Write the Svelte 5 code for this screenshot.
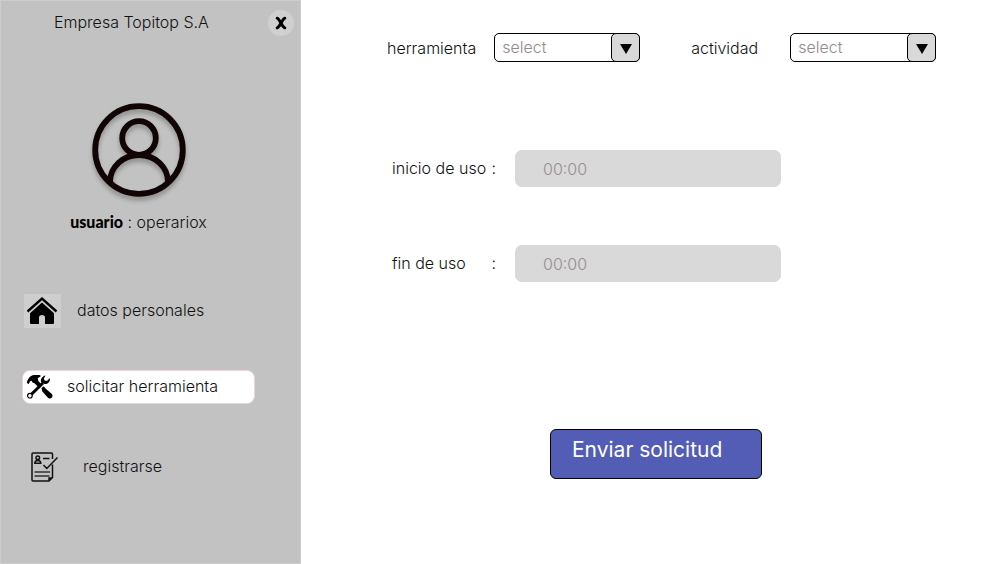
<script>
  const tools = ['martillo', 'taladro', 'sierra'];
  const activities = ['montaje', 'reparación', 'mantenimiento'];

  let tool = $state('');
  let activity = $state('');
  let start = $state('');
  let end = $state('');
</script>

<div class="app">
  <aside class="sidebar">
    <header class="top">
      <span class="company">Empresa Topitop S.A</span>
      <button class="close" type="button" aria-label="Cerrar">
        <svg viewBox="0 0 12 14" width="12" height="14" aria-hidden="true">
          <path d="M2.2 2.2 C4.5 3 6.8 10.500 9.800 11.800 M9.800 2.200 C7.500 3 5.200 10.500 2.200 11.800" />
        </svg>
      </button>
    </header>

    <section class="profile">
      <svg class="avatar" viewBox="0 0 94 94" width="94" height="94" aria-hidden="true">
        <circle cx="47" cy="47" r="43.800" />
        <circle cx="47" cy="35" r="16.800" />
        <path d="M18 79 C18 64 31 52 47 52 S76 64 76 79" />
      </svg>
      <p class="user"><strong>usuario</strong> : operariox</p>
    </section>

    <nav class="menu">
      <a class="item home" href="#datos">
        <span class="tile">
          <svg viewBox="0 0 32 30" width="32" height="30" aria-hidden="true">
            <path d="M0.500 15.500 L15 2.500 L29.500 15.500" fill="none" stroke="#000" stroke-width="2.400" />
            <path d="M15 6.500 L27 17.300 V27 Q27 28 26 28 H18 V21.500 Q18 19 15 19 Q12 19 12 21.500 V28 H4 Q3 28 3 27 V17.300 Z" />
          </svg>
        </span>
        <span>datos personales</span>
      </a>
      <a class="item tool active" href="#solicitar" aria-current="page">
        <svg viewBox="0 0 28 26" width="28" height="26" aria-hidden="true">
          <path d="M0.800 9 C1.500 5 4.500 1.200 8 1 L13.500 1 L15 2 L11.800 4.300 L12.300 7 L15.200 10 L12.200 13 L8.500 9.300 L6.800 8.700 L5.600 6.800 L4 7.200 L2.800 10 Z" />
          <path d="M15.500 14 L17.800 12.300 L19.500 14.500 L25.600 19.800 C28 22 25.500 25.500 22.600 24.200 C20.500 22.600 18.500 19.500 16.300 17.400 Z" />
          <path d="M4.300 21.300 L17 9" fill="none" stroke="#000" stroke-width="3" />
          <path d="M19.500 1.500 L17.800 4.800 L18.800 6.800 L21.200 6.800 L23.800 4 C24.500 8 21.500 10.800 18 9.800 L15.200 8.500 C14.200 5.500 16.200 2 19.500 1.500 Z" />
          <circle cx="3.900" cy="21.700" r="2.300" fill="#fff" stroke="#000" stroke-width="1.200" />
        </svg>
        <span>solicitar herramienta</span>
      </a>
      <a class="item register" href="#registrarse">
        <svg viewBox="0 0 28 30" width="28" height="30" fill="none" stroke="#111" stroke-width="1.500" aria-hidden="true">
          <path d="M21.500 7 V2 Q21.500 1 20.500 1 H2 Q1 1 1 2 V28 Q1 29 2 29 H18 L21.500 25.500 V12.500 M18 29 V26 H21.500" />
          <circle cx="6.800" cy="5.800" r="1.800" />
          <path d="M3.800 11.200 C3.800 7.500 9.800 7.500 9.800 11.200 Z M12 6.500 H18.500 M12.500 13 L15.800 16.500 L26.500 5.500" />
          <path d="M3.500 20 H19 M3.500 24 H18.500" stroke="#333" />
        </svg>
        <span>registrarse</span>
      </a>
    </nav>
  </aside>

  <main>
    <form onsubmit={(e) => e.preventDefault()}>
      <div class="choices">
        <div class="choice">
          <label for="tool">herramienta</label>
          <div class="select">
            <select id="tool" bind:value={tool}>
              <option value="">select</option>
              {#each tools as name}<option>{name}</option>{/each}
            </select>
            <span class="arrow"></span>
          </div>
        </div>
        <div class="choice">
          <label for="activity">actividad</label>
          <div class="select">
            <select id="activity" bind:value={activity}>
              <option value="">select</option>
              {#each activities as name}<option>{name}</option>{/each}
            </select>
            <span class="arrow"></span>
          </div>
        </div>
      </div>

      <div class="times">
        <label for="start"><span>inicio de uso</span><span>:</span></label>
        <input id="start" type="text" placeholder="00:00" bind:value={start} />
        <label for="end"><span>fin de uso</span><span>:</span></label>
        <input id="end" type="text" placeholder="00:00" bind:value={end} />
      </div>

      <button class="submit" type="submit">Enviar solicitud</button>
    </form>
  </main>
</div>

<style>
  :global(body) {
    margin: 0;
    background: #fff;
  }

  .app {
    display: grid;
    grid-template-columns: minmax(301px, 30%) 1fr;
    min-height: 100vh;
    font: 300 16px/20px Inter, 'Liberation Sans', sans-serif;
    color: #111;
  }

  .app * {
    box-sizing: border-box;
  }

  button,
  input,
  select {
    font: inherit;
  }

  .sidebar {
    background: #c2c2c2;
    border: 1px solid #cdcdcd;
  }

  .top {
    display: flex;
    justify-content: space-between;
    align-items: center;
    padding: 9px 6px 0 53px;
  }

  .company {
    padding-bottom: 2px;
  }

  .close {
    display: grid;
    place-items: center;
    width: 26px;
    height: 26px;
    padding: 0;
    border: 0;
    border-radius: 50%;
    background: #d0d0d0;
  }

  .close path {
    fill: none;
    stroke: #000;
    stroke-width: 3;
    stroke-linecap: round;
  }

  .profile {
    display: flex;
    flex-direction: column;
    align-items: center;
    padding: 67px 24px 0 0;
  }

  .avatar {
    fill: none;
    stroke: #100404;
    stroke-width: 5.800;
    filter: drop-shadow(0 4px 2px rgba(0, 0, 0, 0.25));
  }

  .user {
    margin: 15px 0 0;
  }

  .user strong {
    font-family: Lato, Inter, sans-serif;
    font-weight: 900;
    color: #000;
  }

  .menu {
    display: grid;
    gap: 42px;
    padding: 62px 45px 0 21px;
  }

  .item {
    display: flex;
    align-items: center;
    height: 34px;
    color: inherit;
    text-decoration: none;
  }

  .home {
    gap: 16px;
    padding-left: 2px;
  }

  .tile {
    display: grid;
    place-items: center;
    width: 37px;
    height: 34px;
    background: #cecece;
  }

  .tool {
    gap: 13px;
    padding-left: 3px;
  }

  .active {
    background: #fff;
    border: 1px solid #ead5da;
    border-radius: 8px;
  }

  .register {
    gap: 24px;
    margin-top: 4px;
    padding-left: 9px;
  }

  .item > span:last-child {
    padding-bottom: 2px;
  }

  form {
    padding: 33px 24px 33px 86px;
  }

  .choices {
    display: flex;
    flex-wrap: wrap;
    gap: 24px 51px;
  }

  .choice {
    display: flex;
    align-items: center;
    gap: 18px;
  }

  .choice label {
    min-width: 81px;
  }

  .select {
    position: relative;
    width: 146px;
  }

  select {
    display: block;
    width: 100%;
    height: 29px;
    padding: 0 36px 2px 7px;
    border: 1px solid #000;
    border-radius: 5px;
    background: #fff;
    color: #958a8a;
    appearance: none;
  }

  .arrow {
    position: absolute;
    top: 0;
    right: 0;
    display: grid;
    place-items: center;
    width: 29px;
    height: 29px;
    border: 1px solid #000;
    border-radius: 5px;
    background: #d9d9d9;
    pointer-events: none;
  }

  .arrow::before {
    content: '';
    margin-top: 3px;
    border: 6px solid transparent;
    border-top: 10px solid #000;
    border-bottom: 0;
  }

  .times {
    display: grid;
    grid-template-columns: 104px minmax(0, 266px);
    align-items: center;
    gap: 58px 19px;
    margin-top: 88px;
    padding-left: 5px;
  }

  .times label {
    display: flex;
    justify-content: space-between;
    padding-bottom: 2px;
  }

  input {
    width: 100%;
    height: 37px;
    padding: 0 28px;
    border: 0;
    border-radius: 7px;
    background: #d9d9d9;
    color: #111;
  }

  input::placeholder {
    color: #978e8e;
    opacity: 1;
  }

  .submit {
    display: block;
    width: 212px;
    height: 50px;
    margin: 147px 0 0 163px;
    padding: 0 20px 9px 21px;
    border: 1px solid #000;
    border-radius: 6px;
    background: #535db5;
    color: #fff;
    font-size: 21px;
    font-weight: 400;
    text-align: left;
    white-space: nowrap;
  }
</style>
